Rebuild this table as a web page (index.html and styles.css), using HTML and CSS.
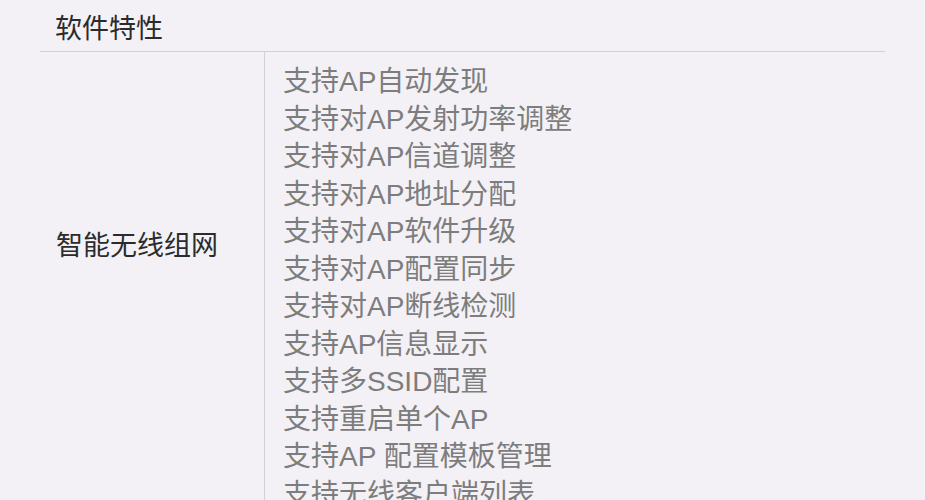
FILE: index.html
```html
<!DOCTYPE html>
<html lang="zh-CN">
<head>
<meta charset="utf-8">
<title>软件特性</title>
<link rel="stylesheet" href="styles.css">
</head>
<body>
<div class="page">
  <h2 class="section-title">软件特性</h2>
  <div class="spec-row">
    <div class="spec-label">智能无线组网</div>
    <ul class="spec-list">
      <li>支持AP自动发现</li>
      <li>支持对AP发射功率调整</li>
      <li>支持对AP信道调整</li>
      <li>支持对AP地址分配</li>
      <li>支持对AP软件升级</li>
      <li>支持对AP配置同步</li>
      <li>支持对AP断线检测</li>
      <li>支持AP信息显示</li>
      <li>支持多SSID配置</li>
      <li>支持重启单个AP</li>
      <li>支持AP 配置模板管理</li>
      <li>支持无线客户端列表</li>
    </ul>
  </div>
</div>
</body>
</html>
```

FILE: styles.css
```css
html, body {
  margin: 0;
  padding: 0;
  background: #f3f1f6;
}

body {
  font-family: "Liberation Sans", "Noto Sans CJK SC", sans-serif;
}

.page {
  margin: 0 40px;
}

.section-title {
  margin: 0;
  height: 52px;
  padding: 1px 0 0 15px;
  display: flex;
  align-items: center;
  font-size: 27px;
  font-weight: normal;
  color: #2b2b2b;
  border-bottom: 1px solid #d2d0d6;
  box-sizing: border-box;
}

.spec-row {
  display: flex;
}

.spec-label {
  width: 225px;
  flex: none;
  box-sizing: border-box;
  padding: 176px 0 0 16px;
  font-size: 27px;
  line-height: 37.5px;
  color: #2b2b2b;
  border-right: 1px solid #d2d0d6;
}

.spec-list {
  list-style: none;
  margin: 0;
  padding: 11px 0 0 18px;
  font-size: 28px;
  line-height: 37.5px;
  color: #7d7d7d;
}
```
